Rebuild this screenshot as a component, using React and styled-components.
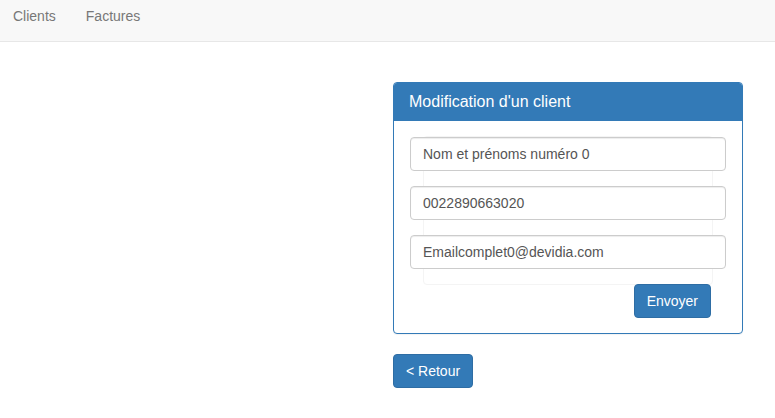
import React from 'react';
import styled, { createGlobalStyle } from 'styled-components';

const Global = createGlobalStyle`
  html, body {
    margin: 0;
    padding: 0;
    background: #fff;
    font-family: "Liberation Sans", Arial, sans-serif;
    font-size: 14px;
    line-height: 1.42857;
    color: #333;
  }
  * { box-sizing: border-box; }
`;

const Navbar = styled.nav`
  height: 42px;
  background: #f8f8f8;
  border-bottom: 1px solid #e7e7e7;
  display: flex;
  align-items: flex-start;
  padding: 6px 0 0 13px;
  gap: 30px;
`;

const NavLink = styled.a`
  color: #777;
  text-decoration: none;
  font-size: 14px;
  line-height: 20px;
`;

const Main = styled.main`
  padding: 40px 0 0 393px;
`;

const Panel = styled.div`
  width: 350px;
  border: 1px solid #337ab7;
  border-radius: 4px;
  margin-bottom: 20px;
  box-shadow: 0 1px 1px rgba(0, 0, 0, 0.05);
`;

const PanelHeading = styled.div`
  background: #337ab7;
  color: #fff;
  padding: 10px 15px;
  height: 38px;
  border-radius: 3px 3px 0 0;
`;

const PanelTitle = styled.h3`
  margin: 0;
  font-size: 16px;
  font-weight: 400;
  line-height: 18px;
`;

const PanelBody = styled.div`
  padding: 16px 15px 15px;
`;

const FieldBox = styled.div`
  margin: -1px 14px 0;
  border: 1px solid #f4f4f4;
  border-radius: 4px;
`;

const Input = styled.input`
  display: block;
  width: calc(100% + 28px);
  margin: 0 -14px 15px;
  height: 34px;
  padding: 6px 12px;
  font-family: inherit;
  font-size: 14px;
  color: #555;
  background: #fff;
  border: 1px solid #ccc;
  border-radius: 4px;
  box-shadow: inset 0 1px 1px rgba(0, 0, 0, 0.075);
  outline: none;
`;

const Actions = styled.div`
  display: flex;
  justify-content: flex-end;
  padding-right: 16px;
  margin-top: -1px;
`;

const Button = styled.button`
  font-family: inherit;
  font-size: 14px;
  line-height: 20px;
  height: 34px;
  padding: 6px 12px;
  color: #fff;
  background: #337ab7;
  border: 1px solid #2e6da4;
  border-radius: 4px;
  cursor: pointer;
`;

export default function App() {
  return (
    <>
      <Global />
      <Navbar>
        <NavLink href="#">Clients</NavLink>
        <NavLink href="#">Factures</NavLink>
      </Navbar>
      <Main>
        <Panel>
          <PanelHeading>
            <PanelTitle>Modification d'un client</PanelTitle>
          </PanelHeading>
          <PanelBody>
            <FieldBox>
              <Input defaultValue="Nom et prénoms numéro 0" />
              <Input defaultValue="0022890663020" />
              <Input defaultValue="Emailcomplet0@devidia.com" />
            </FieldBox>
            <Actions>
              <Button>Envoyer</Button>
            </Actions>
          </PanelBody>
        </Panel>
        <Button>&lt; Retour</Button>
      </Main>
    </>
  );
}
